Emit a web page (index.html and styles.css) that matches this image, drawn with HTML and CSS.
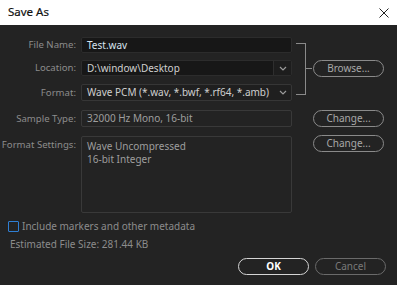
FILE: index.html
```html
<!DOCTYPE html>
<html>
<head>
<meta charset="utf-8">
<link rel="stylesheet" href="styles.css">
</head>
<body>
<div class="dialog">
  <div class="titlebar">
    <span class="title">Save As</span>
    <svg class="close" width="10" height="10" viewBox="0 0 10 10"><path d="M0.5 0.5 L9.5 9.5 M9.5 0.5 L0.5 9.5" stroke="#222" stroke-width="1"/></svg>
  </div>
  <div class="body">
    <div class="form">
      <label class="lbl r1 h16">File Name:</label>
      <div class="field input r1 h16"><span class="fname">Test.wav</span></div>

      <label class="lbl r2 h16">Location:</label>
      <div class="field input select r2 h16"><span class="val">D:\window\Desktop</span><span class="arrow split"><svg width="8" height="5" viewBox="0 0 8 5"><path d="M1 1 L4 4 L7 1" fill="none" stroke="#9a9a9a" stroke-width="1.2"/></svg></span></div>

      <label class="lbl r3 h17">Format:</label>
      <div class="field dropdown select r3 h17"><span class="val">Wave PCM (*.wav, *.bwf, *.rf64, *.amb)</span><span class="arrow"><svg width="8" height="5" viewBox="0 0 8 5"><path d="M1 1 L4 4 L7 1" fill="none" stroke="#9a9a9a" stroke-width="1.2"/></svg></span></div>

      <div class="bracket"></div>
      <button class="btn browse">Browse...</button>

      <label class="lbl r4 h17">Sample Type:</label>
      <div class="field disabled r4 h17"><span class="val">32000 Hz Mono, 16-bit</span></div>
      <button class="btn change1">Change...</button>

      <label class="lbl r5 h17">Format Settings:</label>
      <div class="field disabled area r5"><span class="val">Wave Uncompressed<br>16-bit Integer</span></div>
      <button class="btn change2">Change...</button>
    </div>

    <div class="check">
      <span class="box"></span>
      <span>Include markers and other metadata</span>
    </div>
    <div class="size">Estimated File Size: 281.44 KB</div>

    <div class="actions">
      <button class="btn ok">OK</button>
      <button class="btn cancel">Cancel</button>
    </div>
  </div>
</div>
</body>
</html>
```

FILE: styles.css
```css
html, body {
  margin: 0;
  padding: 0;
  width: 397px;
  height: 285px;
  overflow: hidden;
  background: #232323;
}
.dialog {
  width: 397px;
  height: 285px;
  font-family: "Noto Sans", "Open Sans", sans-serif;
  font-size: 10px;
  display: flex;
  flex-direction: column;
}
.titlebar {
  height: 25px;
  background: #ffffff;
  display: flex;
  align-items: center;
  justify-content: space-between;
  padding: 0 7px 0 8px;
  box-sizing: border-box;
}
.title {
  font-size: 11.5px;
  color: #111;
  margin-top: -2px;
  -webkit-text-stroke: 0.2px #111;
}
.close { margin-right: 1px; }

.body {
  flex: 1;
  background: #232323;
  display: flex;
  flex-direction: column;
  padding: 12px 0 0 0;
}
.form {
  display: grid;
  grid-template-columns: 77px 215px 21px 71px;
  grid-template-rows: 23px 24px 26px 26px 77px;
  align-items: start;
}
.lbl {
  grid-column: 1;
  color: #8c8c8c;
  text-align: right;
  padding-right: 1px;
  font-size: 9.6px;
  white-space: nowrap;
}
.h16 { height: 16px; line-height: 16px; }
.h17 { height: 17px; line-height: 17px; }
.r1 { grid-row: 1; }
.r2 { grid-row: 2; }
.r3 { grid-row: 3; }
.r4 { grid-row: 4; }
.r5 { grid-row: 5; }

.field {
  grid-column: 2;
  margin-left: 4px;
  box-sizing: border-box;
  border-radius: 2px;
  display: flex;
  align-items: center;
  color: #cfcfcf;
  padding-left: 5px;
  white-space: nowrap;
  overflow: hidden;
}
.input {
  background: #171717;
  border: 1px solid #2c2c2c;
}
.dropdown {
  background: #1f1f1f;
  border: 1px solid #363636;
}
.disabled {
  background: #232323;
  border: 1px solid #393939;
  color: #9e9e9e;
}
.area {
  height: 77px;
  align-items: flex-start;
  padding-top: 3px;
  line-height: 13px;
}
.fname {
  color: #d8e4f0;
}
.select { padding-right: 0; }
.select .val { flex: 1; }
.arrow {
  width: 17px;
  height: 100%;
  display: flex;
  align-items: center;
  justify-content: center;
}
.arrow.split {
  border-left: 1px solid #2e2e2e;
  background: #1d1d1d;
}

.bracket {
  grid-column: 3;
  grid-row: 1 / 4;
  margin: 6px 7px 0 4px;
  height: 52px;
  box-sizing: border-box;
  border: 1px solid #8a8a8a;
  border-left: none;
  position: relative;
}
.bracket::after {
  content: "";
  position: absolute;
  right: -7px;
  top: 24px;
  width: 6px;
  height: 1px;
  background: #8a8a8a;
}

.btn {
  font-family: "Noto Sans", "Open Sans", sans-serif;
  font-size: 10px;
  background: transparent;
  border: 1.5px solid #8a8a8a;
  color: #a8a8a8;
  border-radius: 9px;
  padding: 0;
  height: 17px;
  line-height: 13px;
  box-sizing: border-box;
}
.browse { grid-column: 4; grid-row: 2; }
.change1 { grid-column: 4; grid-row: 4; }
.change2 { grid-column: 4; grid-row: 5; margin-top: -1px; }

.check {
  display: flex;
  align-items: center;
  margin: 7px 0 0 8px;
  color: #8c8c8c;
  height: 12px;
}
.box {
  width: 11px;
  height: 11px;
  box-sizing: border-box;
  border: 1.5px solid #2f7fd4;
  border-radius: 1px;
  margin-right: 3px;
}
.size {
  color: #8c8c8c;
  margin: 5px 0 0 10px;
  line-height: 14px;
}
.actions {
  display: flex;
  justify-content: flex-end;
  gap: 6px;
  margin: 7px 11px 0 0;
}
.ok, .cancel {
  width: 71px;
  height: 17px;
}
.ok {
  border-color: #d4d4d4;
  color: #ffffff;
  font-weight: bold;
}
.cancel {
  border-color: #6a6a6a;
  color: #7a7a7a;
}
```
